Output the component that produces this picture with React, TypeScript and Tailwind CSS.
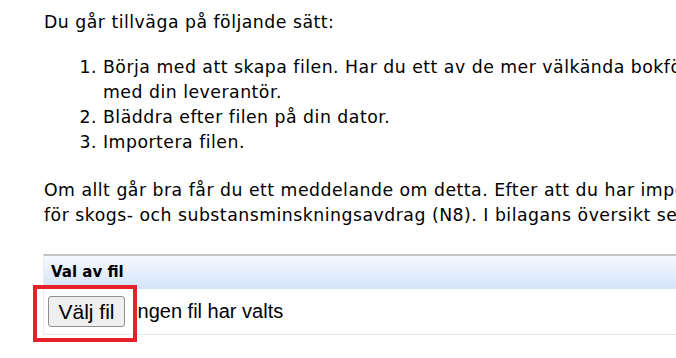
export default function App() {
  return (
    <div className="relative w-[676px] h-[358px] overflow-hidden bg-white text-black font-['DejaVu_Sans',Verdana,sans-serif] text-[17.3px] leading-[25px]">
      <div className="pl-[44px] pt-[10px] whitespace-nowrap tracking-[0.5px]">
        <p>Du går tillväga på följande sätt:</p>
        <ol className="list-decimal pl-[59px] mt-[20px]">
          <li>
            Börja med att skapa filen. Har du ett av de mer välkända bokföringsprogrammen
            <br />
            med din leverantör.
          </li>
          <li>Bläddra efter filen på din dator.</li>
          <li>Importera filen.</li>
        </ol>
        <p className="mt-[23px]">
          Om allt går bra får du ett meddelande om detta. Efter att du har importerat filen
          <br />
          för skogs- och substansminskningsavdrag (N8). I bilagans översikt ser du
        </p>
      </div>
      <div className="ml-[43px] mt-[26px] border-t-2 border-l border-[#c4c4c4] border-l-[#ececec]">
        <div className="h-[33px] flex items-center pl-[7px] bg-gradient-to-b from-[#f6f9fe] to-[#d4e3fa] font-bold text-[15px]">
          Val av fil
        </div>
        <div className="h-[46px] flex items-center pl-[4px] border-b border-[#e8e8e8] font-['Liberation_Sans',Arial,sans-serif] text-[20px]">
          <button className="w-[77px] h-[31px] bg-[#efefef] border border-[#8f8f8f] rounded-[3px] text-[21px] leading-none">
            Välj fil
          </button>
          <span className="ml-[7px]">Ingen fil har valts</span>
        </div>
      </div>
      <div className="absolute left-[33px] top-[285px] w-[104px] h-[57px] border-4 border-[#e8202a]" />
    </div>
  );
}
